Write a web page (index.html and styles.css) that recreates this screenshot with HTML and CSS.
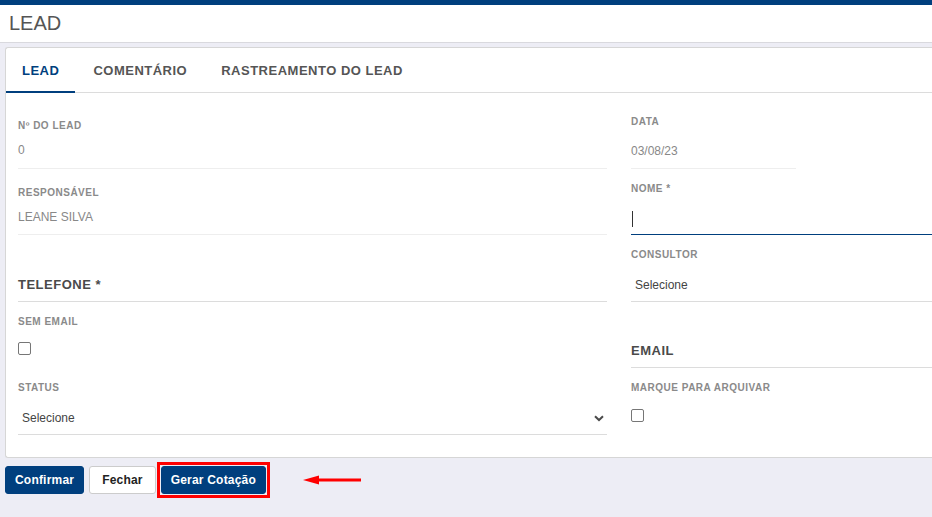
FILE: index.html
```html
<!DOCTYPE html>
<html lang="pt-BR">
<head>
    <meta charset="UTF-8">
    <meta name="viewport" content="width=device-width, initial-scale=1.0">
    <title>Lead</title>
    <link rel="stylesheet" href="styles.css">
</head>
<body>
    <div class="topbar"></div>
    <header class="page-header">
        <h1>LEAD</h1>
    </header>

    <main class="page">
        <section class="card">
            <nav class="tabs">
                <a class="tab active">LEAD</a>
                <a class="tab">COMENTÁRIO</a>
                <a class="tab">RASTREAMENTO DO LEAD</a>
            </nav>

            <div class="form">
                <!-- coluna esquerda -->
                <div class="col">
                    <div class="field f-lead">
                        <div class="label">Nº do lead</div>
                        <div class="value">0</div>
                    </div>
                    <div class="field f-resp">
                        <div class="label">Responsável</div>
                        <div class="value">LEANE SILVA</div>
                    </div>
                    <div class="section-title f-phone">Telefone <span class="req">*</span></div>
                    <div class="f-noemail">
                        <div class="label">Sem email</div>
                        <span class="checkbox"></span>
                    </div>
                    <div class="f-status">
                        <div class="label">Status</div>
                        <div class="select">
                            <span>Selecione</span>
                            <svg class="chevron" width="10" height="7" viewBox="0 0 10 7">
                                <path d="M1 1.2 L5 5 L9 1.2" fill="none" stroke="#4a4a4a" stroke-width="2"/>
                            </svg>
                        </div>
                    </div>
                </div>

                <!-- coluna direita -->
                <div class="col">
                    <div class="field f-date">
                        <div class="label">Data</div>
                        <div class="value">03/08/23</div>
                    </div>
                    <div class="f-name">
                        <div class="label">Nome <span class="req">*</span></div>
                        <div class="input"><span class="caret"></span></div>
                    </div>
                    <div class="f-consultor">
                        <div class="label">Consultor</div>
                        <div class="select"><span>Selecione</span></div>
                    </div>
                    <div class="section-title f-email">Email</div>
                    <div class="f-archive">
                        <div class="label">Marque para arquivar</div>
                        <span class="checkbox"></span>
                    </div>
                </div>
            </div>
        </section>

        <div class="actions">
            <button class="btn btn-primary btn-confirm">Confirmar</button>
            <button class="btn btn-default">Fechar</button>
            <span class="marked">
                <button class="btn btn-primary btn-quote">Gerar Cotação</button>
            </span>
            <svg class="arrow" width="60" height="10" viewBox="0 0 60 10">
                <path d="M0 5 L16 0.5 L16 9.5 Z" fill="#f00"/>
                <rect x="14" y="3.5" width="44" height="3" fill="#f00"/>
            </svg>
        </div>
    </main>
</body>
</html>
```

FILE: styles.css
```css
* {
    margin: 0;
    padding: 0;
    box-sizing: border-box;
}

body {
    font-family: "Liberation Sans", Arial, sans-serif;
    background: #ededf5;
    color: #444;
    min-height: 100vh;
    overflow: hidden;
}

.topbar {
    height: 5px;
    background: #003f7e;
}

.page-header {
    height: 38px;
    background: #fff;
    border-bottom: 1px solid #d9d9de;
    padding-left: 9px;
    display: flex;
    align-items: center;
}

.page-header h1 {
    font-size: 20px;
    font-weight: normal;
    color: #555;
}

.page {
    padding: 4px 0 0 5px;
}

/* o card continua além da borda direita da tela */
.card {
    background: #fff;
    border: 1px solid #d6d6d6;
    border-right: none;
    border-radius: 3px 0 0 3px;
}

/* abas */
.tabs {
    display: flex;
    gap: 2px;
    height: 45px;
    border-bottom: 1px solid #dcdcdc;
}

.tab {
    display: flex;
    align-items: center;
    padding: 2px 16px 0;
    margin-bottom: -1px;
    font-size: 13px;
    font-weight: bold;
    letter-spacing: 0.5px;
    color: #555;
    border-bottom: 2px solid transparent;
}

.tab.active {
    color: #003f7e;
    border-bottom-color: #003f7e;
}

/* formulário */
.form {
    display: grid;
    grid-template-columns: 589px 1fr;
    gap: 24px;
    padding: 0 0 22px 12px;
}

.label {
    font-size: 10px;
    line-height: 16px;
    font-weight: bold;
    text-transform: uppercase;
    letter-spacing: 0.5px;
    color: #8a8a8a;
}

.req {
    letter-spacing: 0;
}

.value {
    font-size: 12px;
    line-height: 20px;
    color: #888;
    margin-top: 6px;
}

.field {
    border-bottom: 1px solid #eee;
    padding-bottom: 8px;
}

.section-title {
    font-size: 13px;
    line-height: 16px;
    font-weight: bold;
    letter-spacing: 0.5px;
    text-transform: uppercase;
    color: #4a4a4a;
    padding-bottom: 8px;
    border-bottom: 1px solid #dcdcdc;
}

.select {
    height: 33px;
    margin-top: 6px;
    padding: 0 3px 0 4px;
    display: flex;
    align-items: center;
    justify-content: space-between;
    font-size: 12px;
    color: #444;
    border-bottom: 1px solid #dcdcdc;
}

.input {
    height: 31px;
    margin-top: 7px;
    display: flex;
    align-items: center;
    padding-left: 1px;
    border-bottom: 1px solid #003f7e;
}

.caret {
    width: 1px;
    height: 16px;
    background: #333;
}

.checkbox {
    display: block;
    width: 13px;
    height: 13px;
    border: 1px solid #767676;
    border-radius: 2px;
    background: #fff;
}

/* espaçamentos da coluna esquerda */
.f-lead { margin-top: 25px; }
.f-resp { margin-top: 16px; padding-bottom: 7px; }
.f-phone { margin-top: 42px; }
.f-noemail { margin-top: 12px; }
.f-noemail .checkbox { margin-top: 12px; }
.f-status { margin-top: 25px; }

/* espaçamentos da coluna direita */
.f-date { margin-top: 21px; width: 165px; padding-bottom: 7px; }
.f-date .value { margin-top: 11px; }
.f-name { margin-top: 12px; }
.f-consultor { margin-top: 12px; }
.f-email { margin-top: 41px; }
.f-archive { margin-top: 12px; }
.f-archive .checkbox { margin-top: 13px; }

/* botões */
.actions {
    display: flex;
    align-items: center;
    gap: 5px;
    margin-top: 8px;
}

.btn {
    height: 28px;
    font-family: inherit;
    font-size: 12px;
    font-weight: bold;
    letter-spacing: 0.2px;
    border-radius: 3px;
    border: 1px solid transparent;
}

.btn-primary {
    background: #003f7e;
    color: #fff;
    border-color: #003f7e;
}

.btn-confirm {
    padding: 0 9px;
}

.btn-default {
    background: #fff;
    color: #222;
    border-color: #ccc;
    padding: 0 12px;
}

.btn-quote {
    padding: 0 9px;
}

/* marcação vermelha em volta do botão */
.marked {
    position: relative;
    display: flex;
}

.marked::after {
    content: "";
    position: absolute;
    inset: -4px;
    border: 3px solid #f00;
}

.arrow {
    margin-left: 32px;
}
```
